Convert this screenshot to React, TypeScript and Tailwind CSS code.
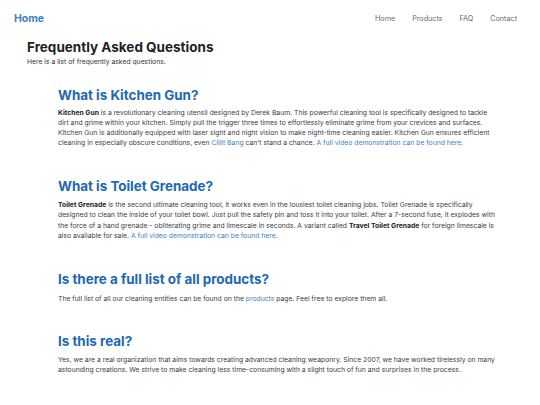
const link = "text-[#3b82c4]";
const strong = "font-bold text-[#1a1a1a]";

export default function App() {
  return (
    <div className="min-h-screen bg-white text-[#404040]" style={{ fontFamily: "Inter, 'Noto Sans', sans-serif" }}>
      <nav className="flex items-center justify-between pl-[14px] pr-[23px] pt-[12px] h-[26px]">
        <a className="text-[10.5px] font-bold text-[#3b82c4]">Home</a>
        <div className="flex gap-[17px] text-[7.2px] text-[#6b6b6b]">
          <a>Home</a>
          <a>Products</a>
          <a>FAQ</a>
          <a>Contact</a>
        </div>
      </nav>

      <main className="px-[27px] pt-[12px]">
        <h1 className="text-[13.5px] font-bold text-[#1f1f1f] leading-[18px]">Frequently Asked Questions</h1>
        <p className="text-[6.8px] text-[#333333] mt-[1px]">Here is a list of frequently asked questions.</p>

        <div className="ml-[31px] flex flex-col mt-[19px]">
          <section className="mb-[29px]">
            <h2 className="text-[13.4px] font-bold text-[#2168b2] leading-[18px]">What is Kitchen Gun?</h2>
            <p className="text-[6.8px] leading-[10px] mt-[4px] whitespace-nowrap">
              <b className={strong}>Kitchen Gun</b> is a revolutionary cleaning utensil designed by Derek Baum. This powerful cleaning tool is specifically designed to tackle
              <br />
              dirt and grime within your kitchen. Simply pull the trigger three times to effortlessly eliminate grime from your crevices and surfaces.
              <br />
              Kitchen Gun is additionally equipped with laser sight and night vision to make night-time cleaning easier. Kitchen Gun ensures efficient
              <br />
              cleaning in especially obscure conditions, even <a className={link}>Cillit Bang</a> can't stand a chance. <a className={link}>A full video demonstration can be found here.</a>
            </p>
          </section>

          <section className="mb-[29px]">
            <h2 className="text-[13.4px] font-bold text-[#2168b2] leading-[18px]">What is Toilet Grenade?</h2>
            <p className="text-[6.8px] leading-[10.2px] mt-[5px] whitespace-nowrap">
              <b className={strong}>Toilet Grenade</b> is the second ultimate cleaning tool, it works even in the lousiest toilet cleaning jobs. Toilet Grenade is specifically
              <br />
              designed to clean the inside of your toilet bowl. Just pull the safety pin and toss it into your toilet. After a 7-second fuse, it explodes with
              <br />
              the force of a hand grenade - obliterating grime and limescale in seconds. A variant called <b className={strong}>Travel Toilet Grenade</b> for foreign limescale is
              <br />
              also available for sale. <a className={link}>A full video demonstration can be found here.</a>
            </p>
          </section>

          <section className="mb-[28px]">
            <h2 className="text-[13.4px] font-bold text-[#2168b2] leading-[18px]">Is there a full list of all products?</h2>
            <p className="text-[6.8px] leading-[10px] mt-[6px] whitespace-nowrap">
              The full list of all our cleaning entities can be found on the <a className={link}>products</a> page. Feel free to explore them all.
            </p>
          </section>

          <section>
            <h2 className="text-[13.4px] font-bold text-[#2168b2] leading-[18px]">Is this real?</h2>
            <p className="text-[6.8px] leading-[10px] mt-[5px] whitespace-nowrap">
              Yes, we are a real organization that aims towards creating advanced cleaning weaponry. Since 2007, we have worked tirelessly on many
              <br />
              astounding creations. We strive to make cleaning less time-consuming with a slight touch of fun and surprises in the process.
            </p>
          </section>
        </div>
      </main>
    </div>
  );
}
